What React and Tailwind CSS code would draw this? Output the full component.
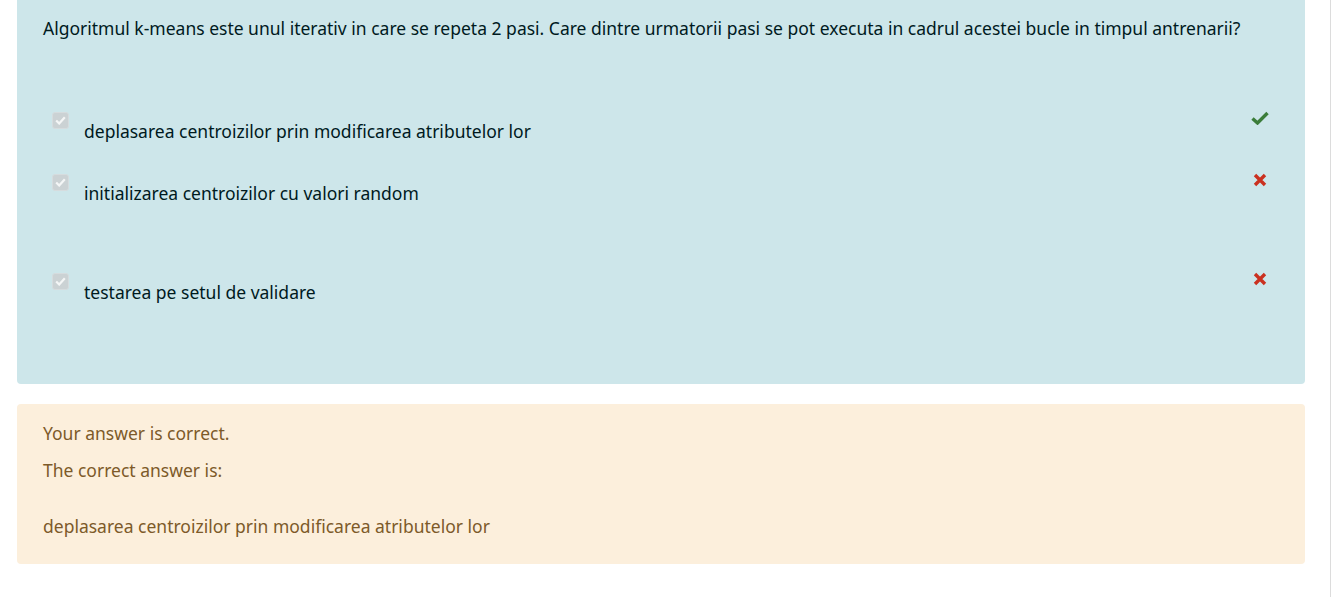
import React from "react";

const Check = () => (
  <svg width="18" height="14" viewBox="0 0 18 14"><path d="M1.5 7.5 L6.5 12 L16.5 2" fill="none" stroke="#3b7d3a" strokeWidth="3.4" strokeLinecap="butt" /></svg>
);
const Cross = () => (
  <svg width="14" height="14" viewBox="0 0 14 14"><path d="M2 2 L12 12 M12 2 L2 12" fill="none" stroke="#ca3120" strokeWidth="3.4" /></svg>
);
const Box = () => (
  <div className="w-[17px] h-[17px] rounded-[3px] bg-[#cbd2d4] border border-[#d6dcde] flex items-center justify-center">
    <svg width="11" height="9" viewBox="0 0 11 9"><path d="M1.2 4.5 L4.2 7.5 L9.8 1.2" fill="none" stroke="#f4f6f6" strokeWidth="2.2" /></svg>
  </div>
);

function Answer({ text, icon, mt, ip }) {
  return (
    <div className={`flex items-start ${mt}`}>
      <div className="w-[41px] pl-[9px] pt-[3px]"><Box /></div>
      <div className="flex-1 pt-[10px] leading-[24px]">{text}</div>
      <div className={`w-[28px] pt-[2px] ${ip}`}>{icon}</div>
    </div>
  );
}

export default function App() {
  return (
    <div className="min-h-screen bg-white" style={{ fontFamily: '"Noto Sans", sans-serif' }}>
      <div className="w-[1331px] min-h-[597px] border-r border-[#dcdcdc] pl-[17px] pr-[25px]">
        <div className="bg-[#cde6ea] text-[#001a1e] rounded-b-[4px] px-[26px] pt-[16px] pb-[40px] text-[17.5px] h-[384px]">
          <p className="leading-[24px]">Algoritmul k-means este unul iterativ in care se repeta 2 pasi. Care dintre urmatorii pasi se pot executa in cadrul acestei bucle in timpul antrenarii?</p>
          <div className="mt-[69px]">
            <Answer text="deplasarea centroizilor prin modificarea atributelor lor" icon={<Check />} mt="" ip="" />
            <Answer text="initializarea centroizilor cu valori random" icon={<Cross />} mt="mt-[28px]" ip="pl-[2px]" />
            <Answer text="testarea pe setul de validare" icon={<Cross />} mt="mt-[65px]" ip="pl-[2px]" />
          </div>
        </div>
        <div className="mt-[20px] bg-[#fcefdc] text-[#7d5a29] rounded-[4px] px-[26px] pt-[17px] h-[160px] text-[17.5px]">
          <p className="leading-[24px]">Your answer is correct.</p>
          <p className="leading-[24px] mt-[13px]">The correct answer is:</p>
          <p className="leading-[24px] mt-[32px]">deplasarea centroizilor prin modificarea atributelor lor</p>
        </div>
      </div>
    </div>
  );
}
